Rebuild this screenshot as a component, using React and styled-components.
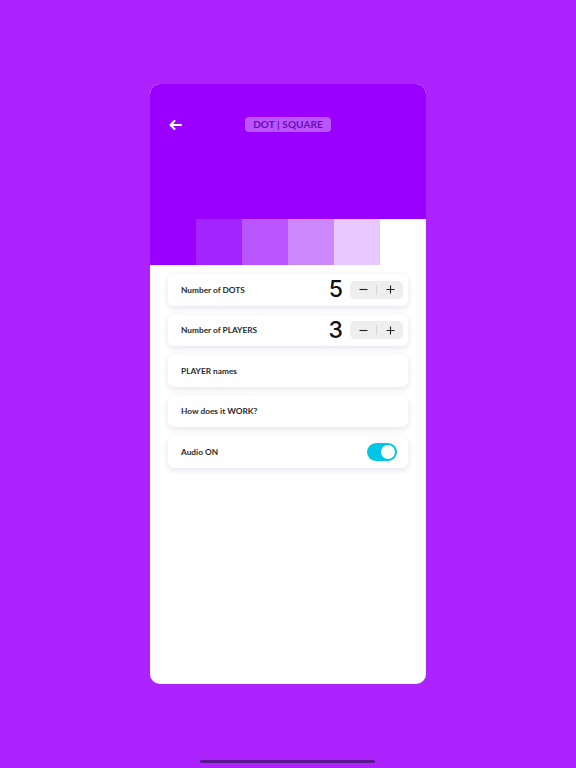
import React, { useState } from 'react';
import styled, { createGlobalStyle } from 'styled-components';

const GlobalStyle = createGlobalStyle`
	html, body {
		margin: 0;
		padding: 0;
		background: #ad23ff;
	}
	body {
		font-family: Lato, "Noto Sans", sans-serif;
	}
`;

const SWATCHES = ['#9900ff', '#a424ff', '#b855ff', '#cc88ff', '#e8c8ff', '#ffffff'];

// +++++++++ CSS +++++++++

const Screen = styled.div`
	width: 576px;
	height: 768px;
	display: flex;
	flex-direction: column;
	align-items: center;
	padding-top: 84px;
	box-sizing: border-box;
	position: relative;
`;

const Card = styled.div`
	width: 276px;
	height: 600px;
	border-radius: 10px;
	overflow: hidden;
	background: #ffffff;
	display: flex;
	flex-direction: column;
`;

const Header = styled.div`
	height: 135px;
	background: #9900ff;
	display: grid;
	grid-template-columns: 40px 1fr 40px;
	align-items: start;
	padding-top: 33px;
	box-sizing: border-box;
`;

const BackButton = styled.button`
	border: 0;
	background: none;
	padding: 0 0 0 19px;
	height: 16px;
	display: flex;
	align-items: center;
	cursor: pointer;
`;

const TitlePill = styled.div`
	justify-self: center;
	background: #bb55ff;
	color: #6a0cb4;
	font-weight: 700;
	font-size: 10px;
	letter-spacing: 0.1px;
	padding: 0 8px;
	height: 15px;
	line-height: 15px;
	border-radius: 4px;
`;

const Swatches = styled.div`
	display: grid;
	grid-template-columns: repeat(6, 1fr);
	height: 46px;
`;

const Swatch = styled.div`
	background: ${(p) => p.color};
`;

const List = styled.div`
	display: flex;
	flex-direction: column;
	gap: 9px;
	padding: 9px 18px 0;
`;

const Row = styled.div`
	height: 31.5px;
	background: #fff;
	border-radius: 6px;
	box-shadow: 0 2px 6px rgba(60, 0, 100, 0.12);
	display: flex;
	align-items: center;
	padding: 0 5px 0 13px;
	box-sizing: border-box;
`;

const Label = styled.span`
	flex: 1;
	font-size: 8.3px;
	font-weight: 700;
	color: #2a2a2a;
`;

const Value = styled.span`
	font-family: Inter, Lato, sans-serif;
	font-size: 23px;
	font-weight: 500;
	color: #111;
	margin-right: 7px;
	line-height: 1;
`;

const Stepper = styled.div`
	display: flex;
	align-items: center;
	width: 53px;
	height: 18px;
	background: #eeeeee;
	border-radius: 5px;
`;

const StepButton = styled.button`
	flex: 1;
	height: 100%;
	border: 0;
	background: none;
	padding: 0;
	display: flex;
	align-items: center;
	justify-content: center;
	cursor: pointer;
`;

const Divider = styled.span`
	width: 1px;
	height: 10px;
	background: #d6d6d6;
`;

const Toggle = styled.button`
	width: 30px;
	height: 18px;
	border-radius: 9px;
	border: 0;
	padding: 0;
	margin-right: 6px;
	background: ${(p) => (p.on ? '#00c6e6' : '#cccccc')};
	display: flex;
	align-items: center;
	justify-content: ${(p) => (p.on ? 'flex-end' : 'flex-start')};
	cursor: pointer;
`;

const Knob = styled.span`
	width: 14px;
	height: 14px;
	margin: 0 2px;
	border-radius: 50%;
	background: #fff;
`;

const HomeBar = styled.div`
	position: absolute;
	left: 200px;
	bottom: 5px;
	width: 175px;
	height: 3px;
	border-radius: 2px;
	background: #5a1a8c;
`;

const Minus = () => (
	<svg width="9" height="9" viewBox="0 0 9 9">
		<path d="M0.5 4.5h8" stroke="#222" strokeWidth="1.1" />
	</svg>
);

const Plus = () => (
	<svg width="9" height="9" viewBox="0 0 9 9">
		<path d="M0.5 4.5h8M4.5 0.5v8" stroke="#222" strokeWidth="1.1" />
	</svg>
);

const Counter = ({ label, value, onChange }) => (
	<Row>
		<Label>{label}</Label>
		<Value>{value}</Value>
		<Stepper>
			<StepButton onClick={() => onChange(value - 1)}><Minus /></StepButton>
			<Divider />
			<StepButton onClick={() => onChange(value + 1)}><Plus /></StepButton>
		</Stepper>
	</Row>
);

export default function App() {
	const [dots, setDots] = useState(5);
	const [players, setPlayers] = useState(3);
	const [audio, setAudio] = useState(true);

	return (
		<Screen>
			<GlobalStyle />
			<Card>
				<Header>
					<BackButton aria-label="back">
						<svg width="13" height="10" viewBox="0 0 13 10">
							<path d="M12 5H2M5.5 1L1.5 5l4 4" fill="none" stroke="#fff" strokeWidth="2" strokeLinecap="round" strokeLinejoin="round" />
						</svg>
					</BackButton>
					<TitlePill>DOT | SQUARE</TitlePill>
				</Header>
				<Swatches>
					{SWATCHES.map((c) => <Swatch key={c} color={c} />)}
				</Swatches>
				<List>
					<Counter label="Number of DOTS" value={dots} onChange={setDots} />
					<Counter label="Number of PLAYERS" value={players} onChange={setPlayers} />
					<Row><Label>PLAYER names</Label></Row>
					<Row><Label>How does it WORK?</Label></Row>
					<Row>
						<Label>Audio ON</Label>
						<Toggle on={audio} onClick={() => setAudio(!audio)}><Knob /></Toggle>
					</Row>
				</List>
			</Card>
			<HomeBar />
		</Screen>
	);
}
